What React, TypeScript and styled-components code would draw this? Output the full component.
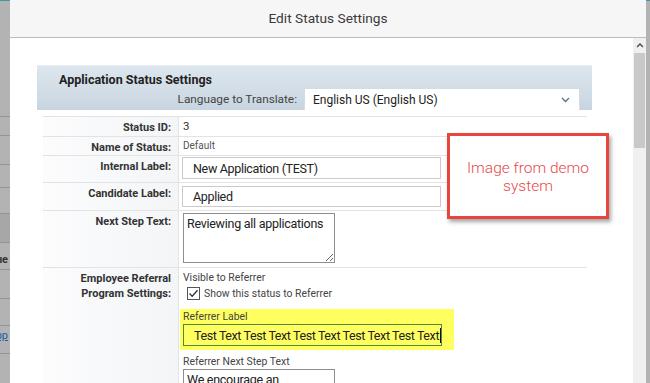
import React from "react";
import styled, { createGlobalStyle } from "styled-components";

const FONT = `Roboto, "Liberation Sans", Arial, sans-serif`;

const Global = createGlobalStyle`
  html, body { margin: 0; padding: 0; overflow: hidden; background: #b2b2b2; }
  * { box-sizing: border-box; }
`;

const Page = styled.div`
  position: relative;
  width: 650px;
  height: 383px;
  display: flex;
  font-family: ${FONT};
  overflow: hidden;
`;

const BackStrip = styled.div<{ $w: number }>`
  width: ${(p) => p.$w}px;
  flex: none;
  background: #b3b3b3;
  border-top: 1px solid #3a9c9c;
  display: flex;
  flex-direction: column;
  overflow: hidden;
`;

const BackSpacer = styled.div<{ $h: number }>`
  height: ${(p) => p.$h}px;
  flex: none;
`;

const BackRow = styled.div<{ $h: number; $shade?: boolean; $pb?: number }>`
  height: ${(p) => p.$h}px;
  flex: none;
  border-top: 1px solid #949494;
  background: ${(p) => (p.$shade ? "#a7a7a7" : "transparent")};
  display: flex;
  justify-content: flex-end;
  align-items: flex-end;
  overflow: hidden;
  white-space: nowrap;
  padding: 0 2px ${(p) => p.$pb ?? 4}px 0;
`;

const BackText = styled.span<{ $link?: boolean }>`
  font-size: 11px;
  font-weight: ${(p) => (p.$link ? 400 : 700)};
  color: ${(p) => (p.$link ? "#1d5fa6" : "#333")};
  text-decoration: ${(p) => (p.$link ? "underline" : "none")};
`;

const Modal = styled.div`
  flex: 1;
  min-width: 0;
  display: flex;
  flex-direction: column;
  background: #fff;
`;

const Header = styled.div`
  height: 38px;
  flex: none;
  background: #f6f6f6;
  border-bottom: 1px solid #bcbcbc;
  display: flex;
  align-items: center;
  justify-content: center;
  padding-bottom: 2px;
  font-size: 13.7px;
  color: #3a3a3a;
`;

const Body = styled.div`
  flex: 1;
  min-height: 0;
  display: flex;
`;

const Content = styled.div`
  flex: 1;
  min-width: 0;
  padding: 27px 0 0 27px;
  overflow: hidden;
`;

const Scrollbar = styled.div`
  width: 13px;
  flex: none;
  background: #f0f0f0;
  display: flex;
  flex-direction: column;
  align-items: center;
`;

const ScrollArrow = styled.div`
  height: 15px;
  display: flex;
  align-items: center;
  justify-content: center;
`;

const ScrollThumb = styled.div`
  width: 11px;
  height: 95px;
  background: #c9c9c9;
`;

const Section = styled.div`
  width: 555px;
`;

const SectionHeader = styled.div`
  height: 45px;
  background: linear-gradient(#dde6ee, #c8d5e0);
  border-top: 1px solid #e6edf3;
  display: flex;
  flex-direction: column;
`;

const SectionTitle = styled.div`
  height: 22px;
  padding: 6px 0 0 22px;
  font-size: 12.5px;
  font-weight: 700;
  color: #222;
`;

const LangRow = styled.div`
  height: 22px;
  display: flex;
  justify-content: flex-end;
  align-items: center;
  gap: 7px;
  padding-right: 12px;
`;

const LangLabel = styled.span`
  font-size: 11.8px;
  color: #444;
`;

const Select = styled.div`
  width: 276px;
  height: 22px;
  background: #fff;
  border: 1px solid #d6dbe0;
  border-bottom: none;
  display: flex;
  align-items: center;
  justify-content: space-between;
  padding: 0 9px 0 8px;
  font-size: 12px;
  color: #222;
`;

const Table = styled.div`
  width: 544px;
  margin: 6px 0 0 6px;
  display: flex;
  flex-direction: column;
`;

const Row = styled.div<{ $h: number }>`
  height: ${(p) => p.$h}px;
  display: grid;
  grid-template-columns: 136px 1fr;
  border-top: 1px solid #e3e3e3;
`;

const LabelCell = styled.div`
  background: linear-gradient(to right, #fcfcfd, #f3f5f7);
  border-right: 1px solid #e3e3e3;
  text-align: right;
  padding: 3px 7px 0 0;
  font-size: 11px;
  line-height: 15px;
  font-weight: 700;
  color: #333;
`;

const ValueCell = styled.div<{ $pt: number; $pl?: number }>`
  padding: ${(p) => p.$pt}px 0 0 ${(p) => p.$pl ?? 3}px;
  display: flex;
  flex-direction: column;
  align-items: flex-start;
`;

const PlainValue = styled.span<{ $small?: boolean }>`
  font-size: ${(p) => (p.$small ? "10px" : "11.5px")};
  line-height: 18px;
  color: ${(p) => (p.$small ? "#555" : "#333")};
  padding-left: 1px;
`;

const TextInput = styled.div<{ $h: number; $hl?: boolean }>`
  width: 259px;
  height: ${(p) => p.$h}px;
  border: 1px solid ${(p) => (p.$hl ? "#4e8a3e" : "#cbcbcb")};
  background: ${(p) => (p.$hl ? "transparent" : "#fff")};
  padding: 0 0 0 10px;
  display: flex;
  align-items: center;
  font-size: 12.5px;
  letter-spacing: ${(p) => (p.$hl ? "-0.4px" : "-0.33px")};
  color: #222;
  white-space: nowrap;
  overflow: hidden;
`;

const Caret = styled.span`
  display: inline-block;
  flex: none;
  width: 1px;
  height: 15px;
  background: #111;
  margin-left: 1px;
`;

const TextArea = styled.textarea<{ $h: number }>`
  width: 152px;
  height: ${(p) => p.$h}px;
  border: 1px solid #8e8e8e;
  border-radius: 0;
  padding: 2px 3px;
  margin: 0;
  font-family: ${FONT};
  font-size: 12.5px;
  letter-spacing: -0.27px;
  line-height: 15px;
  color: #222;
  background: #fff;
  resize: both;
  outline: none;
`;

const SmallLabel = styled.span<{ $ml?: number }>`
  font-size: 10.4px;
  line-height: 14px;
  color: #444;
  margin-left: ${(p) => p.$ml ?? 0}px;
  white-space: nowrap;
`;

const CheckRow = styled.label`
  display: flex;
  align-items: center;
  gap: 4px;
  margin: 0 0 0 7px;
  height: 16px;
  font-size: 10.4px;
  color: #444;
  white-space: nowrap;
`;

const Highlight = styled.div`
  width: 274px;
  margin-top: 8px;
  background: #ffff60;
  padding: 1px 13px 4px 3px;
  display: flex;
  flex-direction: column;
`;

const Spaced = styled.div<{ $mt: number; $ml?: number }>`
  margin: ${(p) => p.$mt}px 0 0 ${(p) => p.$ml ?? 0}px;
  display: flex;
  flex-direction: column;
`;

const Annotation = styled.div`
  position: absolute;
  left: 447px;
  top: 133px;
  width: 162px;
  height: 86px;
  background: #fff;
  border: 3px solid #e8453f;
  box-shadow: 2px 3px 4px rgba(0, 0, 0, 0.35);
  display: flex;
  align-items: center;
  justify-content: center;
  text-align: center;
  font-size: 15.5px;
  font-weight: 300;
  line-height: 18px;
  color: #e8474b;
  padding-top: 2px;
`;

const Checkbox = () => (
  <svg width="13" height="13" viewBox="0 0 13 13">
    <rect x="0.5" y="0.5" width="12" height="12" fill="#fff" stroke="#555" />
    <path d="M2.5 6.5 L5.2 9.2 L10.5 3.2" fill="none" stroke="#333" strokeWidth="1.3" />
  </svg>
);

const Chevron = () => (
  <svg width="9" height="6" viewBox="0 0 9 6">
    <path d="M1 1 L4.5 4.5 L8 1" fill="none" stroke="#5b6f88" strokeWidth="1.3" />
  </svg>
);

const UpArrow = () => (
  <svg width="8" height="5" viewBox="0 0 8 5">
    <path d="M1 4 L4 1 L7 4" fill="none" stroke="#555" strokeWidth="1.5" />
  </svg>
);

const backRows = [
  { h: 19 },
  { h: 29 },
  { h: 23 },
  { h: 26 },
  { h: 29, shade: true },
  { h: 27, text: "Value", pb: 3 },
  { h: 29 },
  { h: 27 },
  { h: 28, link: "App", pb: 11 },
  { h: 40 },
];

export default function App() {
  return (
    <>
      <Global />
      <Page>
        <BackStrip $w={10}>
          <BackSpacer $h={115} />
          {backRows.map((r, i) => (
            <BackRow key={i} $h={r.h} $shade={r.shade} $pb={r.pb}>
              {r.text && <BackText>{r.text}</BackText>}
              {r.link && <BackText $link>{r.link}</BackText>}
            </BackRow>
          ))}
        </BackStrip>
        <Modal>
          <Header>Edit Status Settings</Header>
          <Body>
            <Content>
              <Section>
                <SectionHeader>
                  <SectionTitle>Application Status Settings</SectionTitle>
                  <LangRow>
                    <LangLabel>Language to Translate:</LangLabel>
                    <Select>
                      <span>English US (English US)</span>
                      <Chevron />
                    </Select>
                  </LangRow>
                </SectionHeader>
                <Table>
                  <Row $h={20}>
                    <LabelCell>Status ID:</LabelCell>
                    <ValueCell $pt={0}>
                      <PlainValue>3</PlainValue>
                    </ValueCell>
                  </Row>
                  <Row $h={19}>
                    <LabelCell>Name of Status:</LabelCell>
                    <ValueCell $pt={0}>
                      <PlainValue $small>Default</PlainValue>
                    </ValueCell>
                  </Row>
                  <Row $h={27}>
                    <LabelCell>Internal Label:</LabelCell>
                    <ValueCell $pt={1}>
                      <TextInput $h={22}>New Application (TEST)</TextInput>
                    </ValueCell>
                  </Row>
                  <Row $h={28}>
                    <LabelCell>Candidate Label:</LabelCell>
                    <ValueCell $pt={3}>
                      <TextInput $h={21}>Applied</TextInput>
                    </ValueCell>
                  </Row>
                  <Row $h={57}>
                    <LabelCell>Next Step Text:</LabelCell>
                    <ValueCell $pt={2} $pl={4}>
                      <TextArea $h={50} readOnly defaultValue="Reviewing all applications" />
                    </ValueCell>
                  </Row>
                  <Row $h={140}>
                    <LabelCell>
                      Employee Referral
                      <br />
                      Program Settings:
                    </LabelCell>
                    <ValueCell $pt={3} $pl={1}>
                      <SmallLabel $ml={3}>Visible to Referrer</SmallLabel>
                      <CheckRow>
                        <Checkbox />
                        Show this status to Referrer
                      </CheckRow>
                      <Highlight>
                        <SmallLabel>Referrer Label</SmallLabel>
                        <TextInput $h={22} $hl>
                          Test Text Test Text Test Text Test Text Test Text
                          <Caret />
                        </TextInput>
                      </Highlight>
                      <Spaced $mt={5} $ml={3}>
                        <SmallLabel>Referrer Next Step Text</SmallLabel>
                        <TextArea
                          $h={50}
                          readOnly
                          defaultValue={"We encourage an\nexperienced candidate to apply"}
                        />
                      </Spaced>
                    </ValueCell>
                  </Row>
                </Table>
              </Section>
            </Content>
            <Scrollbar>
              <ScrollArrow>
                <UpArrow />
              </ScrollArrow>
              <ScrollThumb />
            </Scrollbar>
          </Body>
        </Modal>
        <BackStrip $w={4} />
        <Annotation>
          Image from demo
          <br />
          system
        </Annotation>
      </Page>
    </>
  );
}
